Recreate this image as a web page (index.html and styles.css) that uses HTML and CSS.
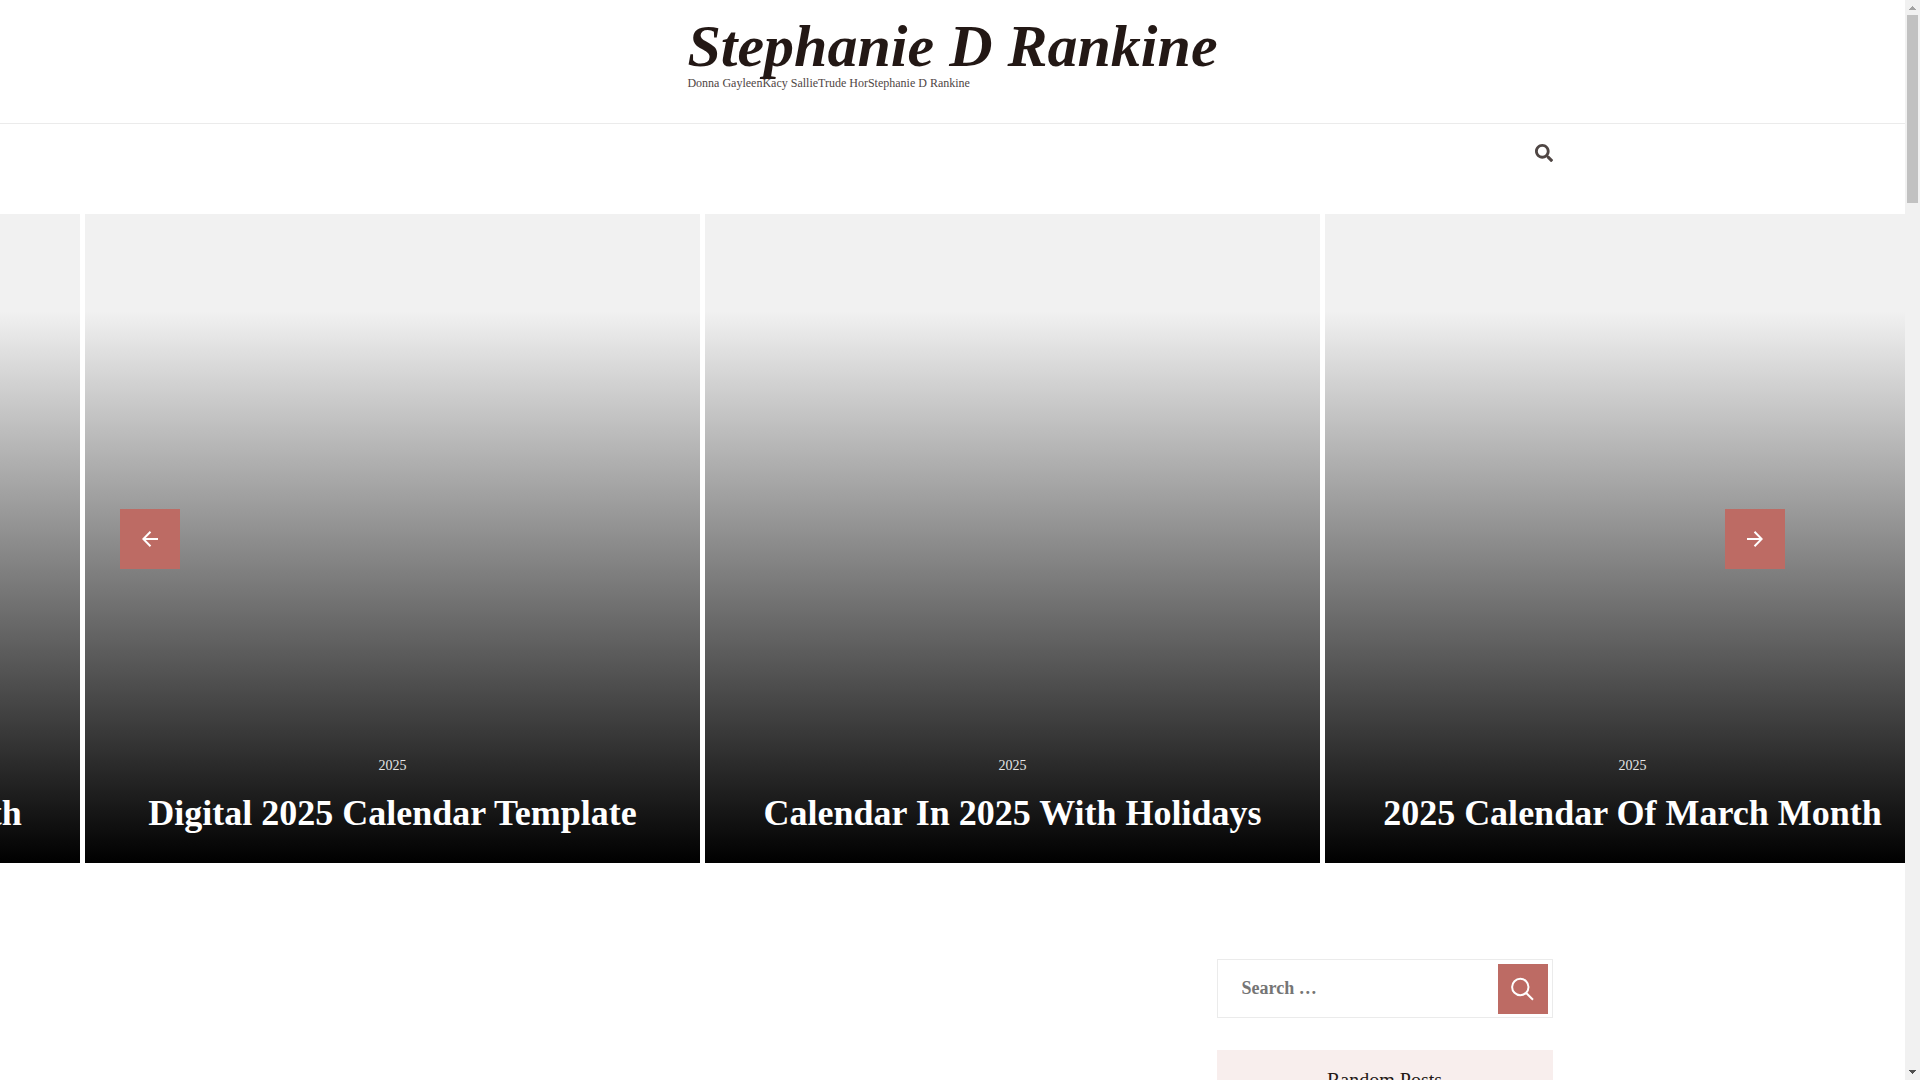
FILE: index.html
```html
<!DOCTYPE html>
<html lang="en">
<head>
    <meta charset="UTF-8">
    <meta name="viewport" content="width=device-width, initial-scale=1">
    <title>Stephanie D Rankine</title>
    <link rel="stylesheet" href="styles.css">
</head>
<body>
    <div class="page">
        <header class="site-header">
            <div class="site-branding">
                <h1 class="site-title"><a href="#">Stephanie D Rankine</a></h1>
                <p class="site-description">Donna GayleenKacy SallieTrude HorStephanie D Rankine</p>
            </div>
        </header>

        <nav class="main-nav">
            <div class="container">
                <button class="nav-search" type="button" aria-label="Open search">
                    <svg viewBox="0 0 512 512" width="18" height="18"><path fill="currentColor" d="M505 442.700L405.300 343c-4.500-4.500-10.600-7-17-7H372c27.600-35.300 44-79.700 44-128C416 93.100 322.900 0 208 0S0 93.100 0 208s93.100 208 208 208c48.300 0 92.700-16.400 128-44v16.300c0 6.400 2.500 12.500 7 17l99.700 99.700c9.400 9.400 24.600 9.400 33.900 0l28.300-28.300c9.400-9.400 9.400-24.600.1-34zM208 336c-70.700 0-128-57.200-128-128 0-70.700 57.200-128 128-128 70.700 0 128 57.200 128 128 0 70.700-57.200 128-128 128z"/></svg>
                </button>
            </div>
        </nav>

        <section class="slider">
            <div class="slider-track">
                <article class="slide">
                    <a class="slide-cat" href="#">2025</a>
                    <h2 class="slide-title"><a href="#">2025 Calendar Of March Month</a></h2>
                </article>
                <article class="slide">
                    <a class="slide-cat" href="#">2025</a>
                    <h2 class="slide-title"><a href="#">Digital 2025 Calendar Template</a></h2>
                </article>
                <article class="slide">
                    <a class="slide-cat" href="#">2025</a>
                    <h2 class="slide-title"><a href="#">Calendar In 2025 With Holidays</a></h2>
                </article>
                <article class="slide">
                    <a class="slide-cat" href="#">2025</a>
                    <h2 class="slide-title"><a href="#">2025 Calendar Of March Month</a></h2>
                </article>
            </div>
            <button class="slider-btn prev" type="button" aria-label="Previous">
                <svg viewBox="0 0 16 16" width="16" height="16"><path d="M16 8H1.500M8.500 .8L1.300 8l7.200 7.200"/></svg>
            </button>
            <button class="slider-btn next" type="button" aria-label="Next">
                <svg viewBox="0 0 16 16" width="16" height="16"><path d="M0 8h14.500M7.500 .8L14.700 8l-7.200 7.200"/></svg>
            </button>
        </section>

        <div class="container content">
            <main class="primary"></main>
            <aside class="sidebar">
                <form class="search-form">
                    <input type="search" placeholder="Search …" aria-label="Search">
                    <button type="submit" aria-label="Search">
                        <svg viewBox="0 0 24 24" width="24" height="24"><circle cx="9.300" cy="10" r="8.200"/><path d="M15.200 16l6.800 6.800"/></svg>
                    </button>
                </form>
                <section class="widget">
                    <h2 class="widget-title">Random Posts</h2>
                </section>
            </aside>
        </div>
    </div>

    <div class="scrollbar" aria-hidden="true">
        <svg class="scroll-up" viewBox="0 0 7 4" width="7" height="4"><path d="M3 0h1v1h1v1h1v1h1v1H0V3h1V2h1V1h1z"/></svg>
        <div class="scroll-thumb"></div>
        <svg class="scroll-down" viewBox="0 0 7 4" width="7" height="4"><path d="M0 0h7v1H6v1H5v1H4v1H3V3H2V2H1V1H0z"/></svg>
    </div>
</body>
</html>
```

FILE: styles.css
```css
* {
    box-sizing: border-box;
}
body {
    margin: 0;
    display: flex;
    height: 100vh;
    overflow: hidden;
    background: #fff;
    color: #231815;
    font-family: "Liberation Serif", "Times New Roman", serif;
}
h1, h2, p {
    margin: 0;
}
a {
    color: inherit;
    text-decoration: none;
}
button {
    display: flex;
    align-items: center;
    justify-content: center;
    padding: 0;
    border: none;
    cursor: pointer;
}
.page {
    flex: 1;
    min-width: 0;
    overflow: hidden;
}
.container {
    max-width: 1200px;
    margin: 0 auto;
}

/* header */
.site-header {
    display: flex;
    justify-content: center;
    padding: 16px 0 33px;
    border-bottom: 1px solid #ebebeb;
}
.site-title {
    font-size: 60px;
    line-height: 60px;
    font-style: italic;
}
.site-description {
    font-size: 12px;
    line-height: 14px;
    color: #4f4644;
}
.main-nav {
    padding: 20px 0 52px;
}
.main-nav .container {
    display: flex;
    justify-content: flex-end;
}
.nav-search {
    background: none;
    color: #4f4644;
}

/* slider */
.slider {
    position: relative;
    overflow: hidden;
}
/* first slide peeks in 80px from the left */
.slider-track {
    --slide: calc((100% - 60px) / 3);
    display: flex;
    gap: 5px;
    width: 100%;
    margin-left: calc(80px - var(--slide));
}
.slide {
    flex: 0 0 var(--slide);
    min-height: 649px;
    display: flex;
    flex-direction: column;
    align-items: center;
    justify-content: flex-end;
    padding: 0 20px 26px;
    background: linear-gradient(#f1f1f1 15%, #000);
    color: #fff;
    text-align: center;
}
.slide-cat {
    margin-bottom: 13px;
    font-size: 14px;
    line-height: 20px;
    color: #e6e6e6;
}
.slide-title {
    font-size: 36px;
    line-height: 48px;
}
.slider-btn {
    position: absolute;
    top: calc(50% - 30px);
    width: 60px;
    height: 60px;
    background: #bd6b64;
}
.slider-btn svg {
    fill: none;
    stroke: #fff;
    stroke-width: 2;
}
.prev {
    left: 120px;
}
.next {
    right: 120px;
}

/* content */
.content {
    display: flex;
    justify-content: space-between;
    padding-top: 96px;
}
.primary {
    flex: 1;
}
.sidebar {
    width: 336px;
}
.search-form {
    display: flex;
    padding: 4px 4px 3px;
    margin-bottom: 32px;
    border: 1px solid #ebebeb;
}
.search-form input {
    flex: 1;
    min-width: 0;
    padding: 0 20px 2px;
    border: none;
    background: none;
    font: bold 18px "Liberation Serif", "Times New Roman", serif;
}
.search-form input::placeholder {
    color: #757575;
}
.search-form button {
    width: 50px;
    height: 50px;
    background: #bd6b64;
}
.search-form svg {
    fill: none;
    stroke: #fff;
    stroke-width: 2;
}
.widget-title {
    padding: 18px;
    background: #f8eeed;
    font-size: 20px;
    line-height: 24px;
    font-weight: normal;
    text-align: center;
}

/* scrollbar */
.scrollbar {
    display: flex;
    flex-direction: column;
    align-items: center;
    width: 15px;
    padding: 6px 0;
    background: #f1f1f1;
}
.scroll-up {
    fill: #a3a3a3;
}
.scroll-thumb {
    width: 11px;
    height: 188px;
    margin: 5px 0 auto;
    background: #c1c1c1;
}
.scroll-down {
    fill: #505050;
}
```
